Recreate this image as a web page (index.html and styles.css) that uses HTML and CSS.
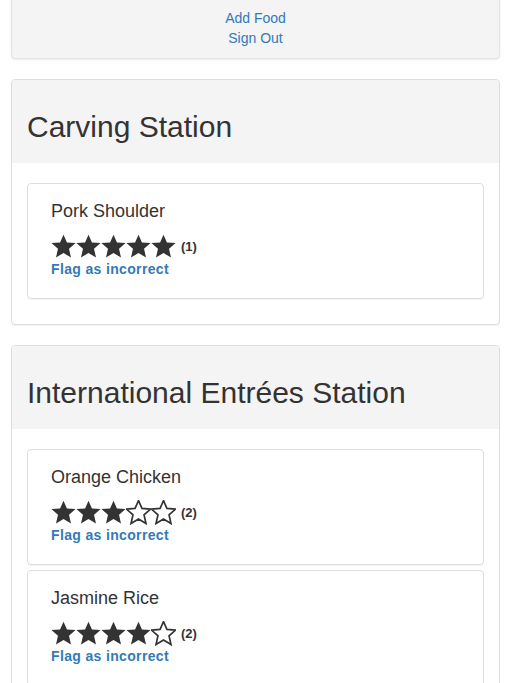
FILE: index.html
```html
<!DOCTYPE html>
<html lang="en">
<head>
    <meta charset="UTF-8">
    <meta name="viewport" content="width=device-width, initial-scale=1.0">
    <title>Food Stations</title>
    <link rel="stylesheet" href="styles.css">
</head>
<body>
    <svg class="defs" width="0" height="0">
        <defs>
            <symbol id="star" viewBox="0 0 24 24">
                <polygon points="12,0.6 15.3,8.1 23.6,8.7 17.3,14.2 19.2,22.6 12,18.2 4.8,22.6 6.7,14.2 0.4,8.7 8.7,8.1"/>
            </symbol>
        </defs>
    </svg>

    <div class="container">
        <div class="well nav-well">
            <a href="#">Add Food</a>
            <a href="#">Sign Out</a>
        </div>

        <div class="panel">
            <div class="panel-heading">
                <h2>Carving Station</h2>
            </div>
            <div class="panel-body">
                <div class="food">
                    <div class="food-name">Pork Shoulder</div>
                    <div class="rating">
                        <svg class="star full"><use href="#star"/></svg>
                        <svg class="star full"><use href="#star"/></svg>
                        <svg class="star full"><use href="#star"/></svg>
                        <svg class="star full"><use href="#star"/></svg>
                        <svg class="star full"><use href="#star"/></svg>
                        <span class="count">(1)</span>
                    </div>
                    <a class="flag" href="#">Flag as incorrect</a>
                </div>
            </div>
        </div>

        <div class="panel">
            <div class="panel-heading">
                <h2>International Entrées Station</h2>
            </div>
            <div class="panel-body">
                <div class="food">
                    <div class="food-name">Orange Chicken</div>
                    <div class="rating">
                        <svg class="star full"><use href="#star"/></svg>
                        <svg class="star full"><use href="#star"/></svg>
                        <svg class="star full"><use href="#star"/></svg>
                        <svg class="star empty"><use href="#star"/></svg>
                        <svg class="star empty"><use href="#star"/></svg>
                        <span class="count">(2)</span>
                    </div>
                    <a class="flag" href="#">Flag as incorrect</a>
                </div>
                <div class="food">
                    <div class="food-name">Jasmine Rice</div>
                    <div class="rating">
                        <svg class="star full"><use href="#star"/></svg>
                        <svg class="star full"><use href="#star"/></svg>
                        <svg class="star full"><use href="#star"/></svg>
                        <svg class="star full"><use href="#star"/></svg>
                        <svg class="star empty"><use href="#star"/></svg>
                        <span class="count">(2)</span>
                    </div>
                    <a class="flag" href="#">Flag as incorrect</a>
                </div>
            </div>
        </div>
    </div>
</body>
</html>
```

FILE: styles.css
```css
* {
    margin: 0;
    padding: 0;
    box-sizing: border-box;
}

body {
    font-family: 'Liberation Sans', Arial, Helvetica, sans-serif;
    font-size: 14px;
    line-height: 20px;
    color: #333;
    background-color: #fff;
}

a {
    color: #337ab7;
    text-decoration: none;
}

.defs {
    position: absolute;
    width: 0;
    height: 0;
}

.container {
    padding: 0 15px 0 11px;
}

.well {
    background-color: #f4f4f4;
    border: 1px solid #e3e3e3;
    border-radius: 4px;
    box-shadow: 0 1px 2px rgba(0, 0, 0, 0.08);
}

.nav-well {
    margin-top: -12px;
    margin-bottom: 20px;
    padding: 19px 19px 10px;
    display: flex;
    flex-direction: column;
    align-items: center;
}

.panel {
    border: 1px solid #ddd;
    border-radius: 4px;
    box-shadow: 0 1px 1px rgba(0, 0, 0, 0.05);
    margin-bottom: 20px;
    overflow: hidden;
}

.panel-heading {
    background-color: #f4f4f4;
    padding: 10px 15px;
}

.panel-heading h2 {
    font-size: 30px;
    font-weight: normal;
    line-height: 33px;
    margin: 20px 0 10px;
}

.panel-body {
    padding: 20px 15px;
}

.food {
    border: 1px solid #ddd;
    border-radius: 4px;
    box-shadow: 0 1px 1px rgba(0, 0, 0, 0.05);
    padding: 17px 23px 19px;
    margin-bottom: 5px;
}

.food-name {
    font-size: 18px;
    line-height: 20px;
}

.rating {
    display: flex;
    align-items: center;
    height: 26px;
    margin-top: 12px;
}

.star {
    width: 25px;
    height: 25px;
    flex: none;
}

.star.full {
    fill: #333;
}

.star.empty {
    fill: #fff;
    stroke: #333;
    stroke-width: 1.6;
}

.count {
    font-size: 13px;
    font-weight: bold;
    margin-left: 5px;
    margin-top: 2px;
}

.flag {
    display: block;
    font-weight: bold;
    letter-spacing: 0.35px;
}
```
